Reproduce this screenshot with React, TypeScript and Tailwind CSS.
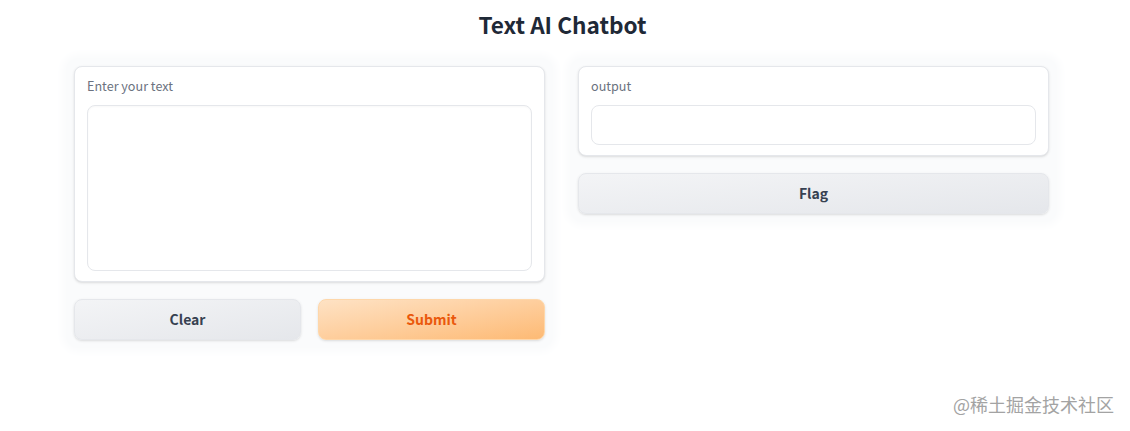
export default function App() {
  return (
    <div className="relative h-[431px] w-[1130px] overflow-hidden bg-white font-['Noto_Sans_CJK_SC','Noto_Sans',sans-serif]">
      {/* Title */}
      <h1 className="pt-[9px] pr-[5px] text-center text-[22.6px] font-bold leading-8 text-[#1f2937]">
        Text AI Chatbot
      </h1>

      <main className="ml-[66px] mt-[17px] grid w-[991px] grid-cols-2 items-start gap-[17px]">
        {/* Input column */}
        <div className="flex flex-col gap-[17px] rounded-xl bg-[#fafbfc] p-2 shadow-[0_0_8px_4px_#fafbfc]">
          <div className="flex h-[216px] flex-col rounded-lg border border-[#e5e7eb] bg-white px-3 pt-[9px] pb-[10px] shadow-sm">
            <label className="text-[12.6px] leading-5 text-[#6b7280]">Enter your text</label>
            <textarea className="mt-[9px] flex-1 resize-none rounded-lg border border-[#e5e7eb] bg-white shadow-[inset_0_1px_2px_rgba(0,0,0,0.03)] outline-none" />
          </div>
          <div className="grid grid-cols-2 gap-[17px]">
            <button className="h-[41px] rounded-lg border border-[#e5e7eb] bg-gradient-to-br from-[#f3f4f6] to-[#e5e7eb] text-[14px] font-bold text-[#374151] shadow-sm">
              Clear
            </button>
            <button className="h-[41px] rounded-lg border border-[#fed7aa] bg-gradient-to-br from-[#fee2c4] to-[#fdba74] text-[14px] font-bold text-[#ea580c] shadow-sm">
              Submit
            </button>
          </div>
        </div>

        {/* Output column */}
        <div className="flex flex-col gap-[17px] rounded-xl bg-[#fafbfc] p-2 shadow-[0_0_8px_4px_#fafbfc]">
          <div className="flex h-[90px] flex-col rounded-lg border border-[#e5e7eb] bg-white px-3 pt-[9px] pb-[10px] shadow-sm">
            <label className="text-[12.6px] leading-5 text-[#6b7280]">output</label>
            <div className="mt-[9px] flex-1 rounded-lg border border-[#e5e7eb] bg-white" />
          </div>
          <button className="h-[41px] rounded-lg border border-[#e5e7eb] bg-gradient-to-br from-[#f3f4f6] to-[#e5e7eb] text-[14px] font-bold text-[#374151] shadow-sm">
            Flag
          </button>
        </div>
      </main>

      {/* Watermark */}
      <div className="absolute left-[953px] top-[392px] font-['Noto_Sans_CJK_SC',sans-serif] text-[18px] leading-6 text-[#a3a3a3]">
        @稀土掘金技术社区
      </div>
    </div>
  );
}
